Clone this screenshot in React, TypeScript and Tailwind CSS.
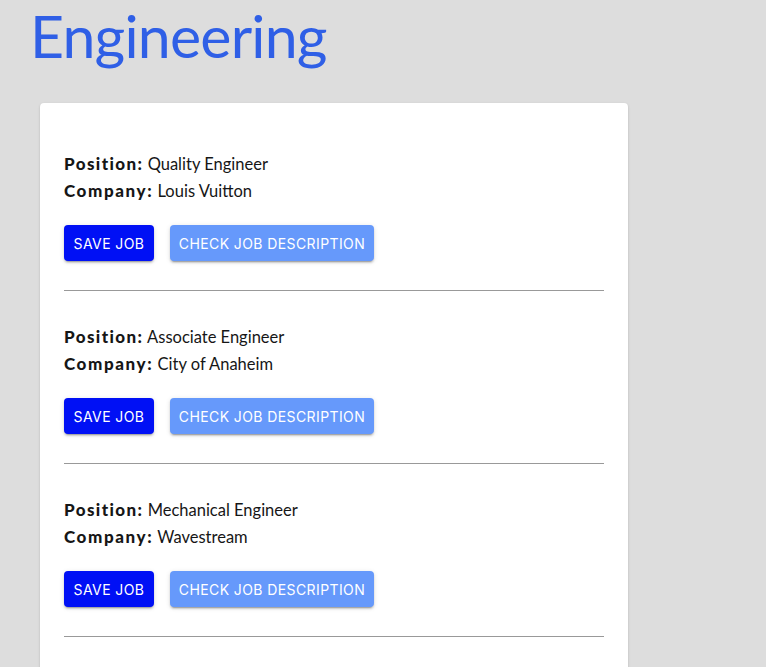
import React from "react";

const jobs = [
  { position: "Quality Engineer", company: "Louis Vuitton" },
  { position: "Associate Engineer", company: "City of Anaheim" },
  { position: "Mechanical Engineer", company: "Wavestream" },
  { position: "Design Engineer", company: "Boeing" },
];

const btnShadow =
  "shadow-[0px_3px_1px_-2px_rgba(0,0,0,0.2),0px_2px_2px_0px_rgba(0,0,0,0.14),0px_1px_5px_0px_rgba(0,0,0,0.12)]";

export default function App() {
  return (
    <div className="min-h-screen bg-[#dddddd] overflow-hidden">
      <h1 className="pl-[30px] pt-0 text-[59px] leading-[71px] text-[#2f5fe6] font-['Lato',sans-serif] tracking-[-0.8px]">
        Engineering
      </h1>
      <div className="ml-[40px] mt-[32px] w-[588px] bg-white rounded-[4px] shadow-[0px_2px_1px_-1px_rgba(0,0,0,0.2),0px_1px_1px_0px_rgba(0,0,0,0.14),0px_1px_3px_0px_rgba(0,0,0,0.12)] px-6 pt-[48px]">
        {jobs.map((j, i) => (
          <div key={i} className={i > 0 ? "mt-[33px]" : ""}>
            <div className="font-['Lato',sans-serif] text-[16.5px] leading-[27px] text-[#161616]">
              <div className="h-[27px] overflow-visible">
                <span className="font-black text-[17px] leading-none tracking-[1.4px]">Position:</span> {j.position}
              </div>
              <div className="h-[27px] overflow-visible">
                <span className="font-black text-[17px] leading-none tracking-[1.6px]">Company:</span> {j.company}
              </div>
            </div>
            <div className="mt-[20px] flex gap-4">
              <button
                className={`h-9 w-[90px] flex items-center justify-center rounded-[4px] bg-[#0010f5] text-white font-['Inter',sans-serif] font-normal text-[14px] tracking-[0.4px] uppercase ${btnShadow}`}
              >
                Save Job
              </button>
              <button
                className={`h-9 w-[204px] flex items-center justify-center rounded-[4px] bg-[#6699fb] text-white font-['Inter',sans-serif] font-normal text-[14px] tracking-[0.4px] uppercase ${btnShadow}`}
              >
                Check Job Description
              </button>
            </div>
            <div className="mt-[29px] h-px bg-[#999999]" />
          </div>
        ))}
      </div>
    </div>
  );
}
